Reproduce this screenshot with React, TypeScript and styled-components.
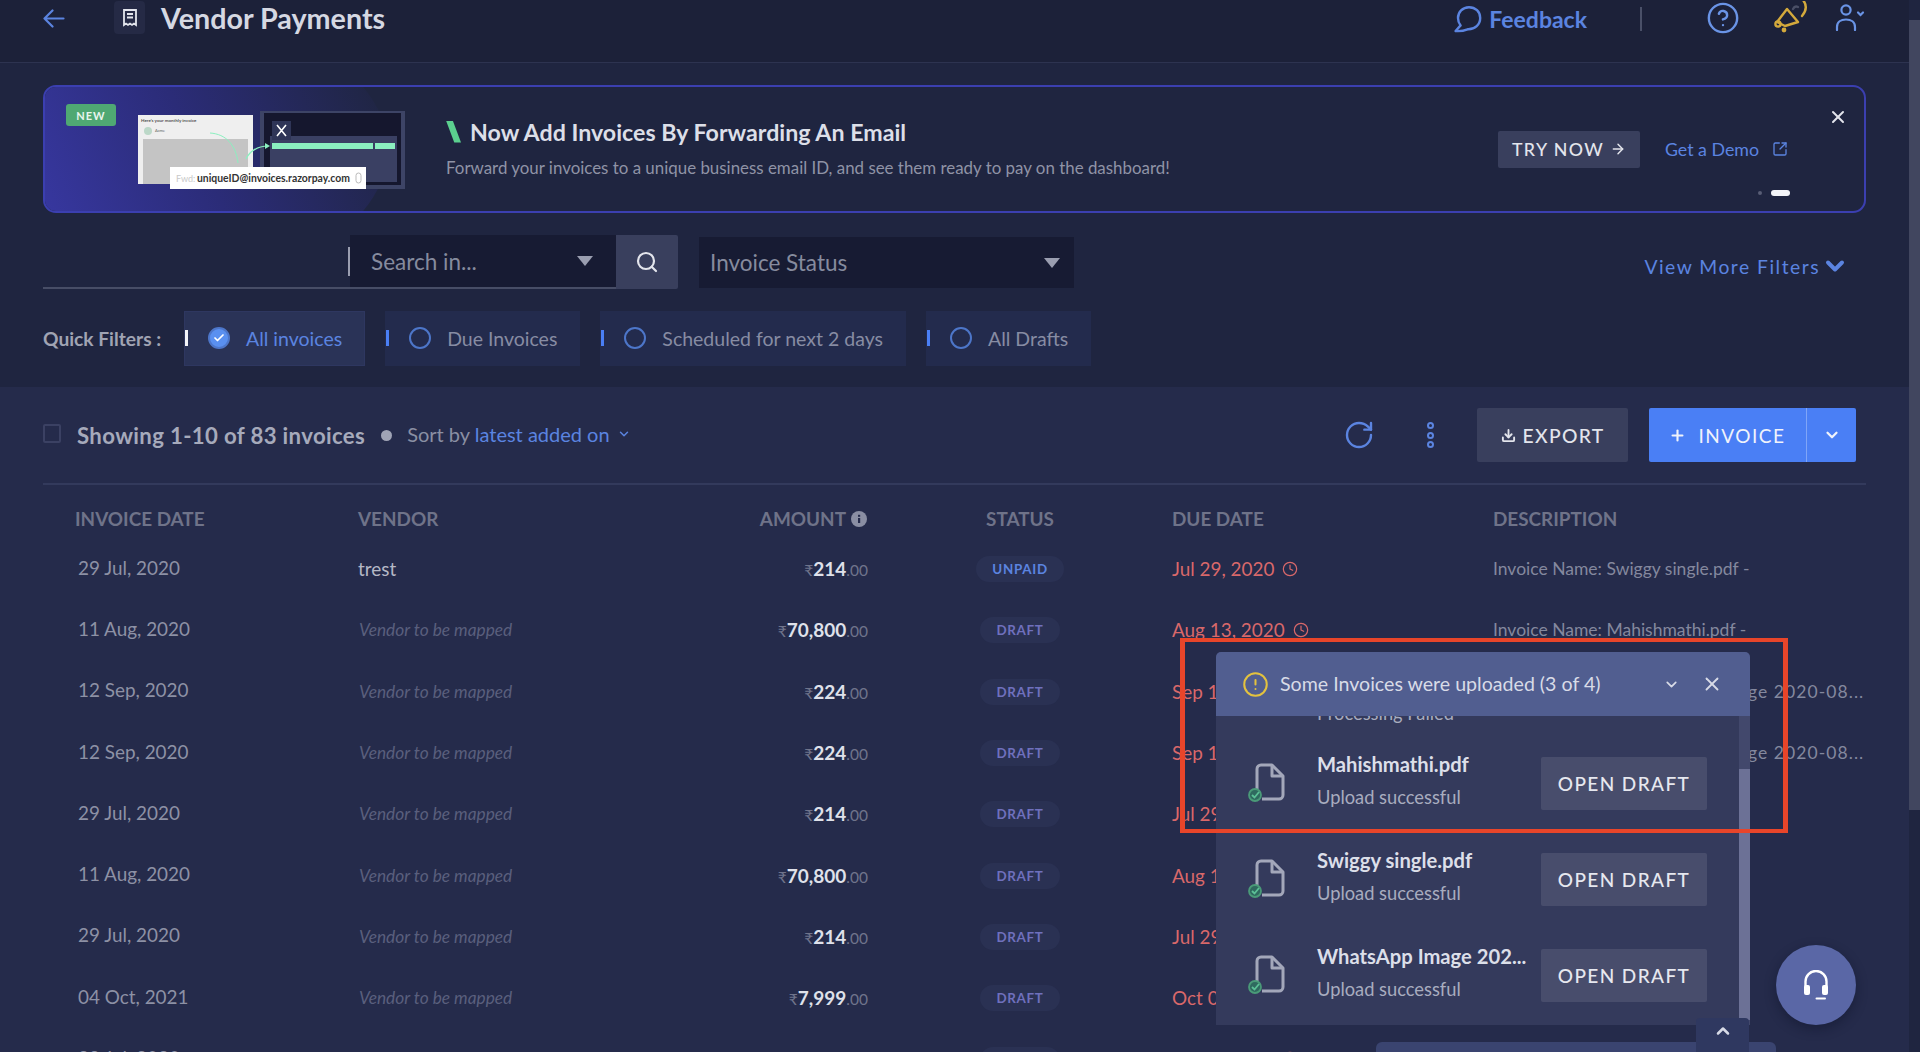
import React from 'react';
import styled, { createGlobalStyle } from 'styled-components';
import {
  ArrowRight,
  Check,
  ChevronDown,
  ChevronUp,
  CircleAlert,
  CircleHelp,
  Clock,
  Download,
  Plus,
  RotateCw,
  Search,
  SquareArrowOutUpRight,
  X,
} from 'lucide-react';

const blue = '#5b84e0';

const GlobalStyle = createGlobalStyle`
  html, body {
    margin: 0;
    padding: 0;
    background: #1f2540;
    font-family: 'Lato', 'Noto Sans', sans-serif;
  }
  * { box-sizing: border-box; }
`;

const Shell = styled.div`
  position: relative;
  display: flex;
  width: 1920px;
  height: 1052px;
  overflow: hidden;
`;

const Main = styled.div`
  width: 1909px;
  display: flex;
  flex-direction: column;
`;

const PageScrollTrack = styled.div`
  width: 11px;
  background: #1f2540;
  padding-top: 20px;
`;

const PageScrollThumb = styled.div`
  height: 790px;
  background: #41465f;
`;

/* header */
const Header = styled.header`
  height: 63px;
  flex: none;
  display: flex;
  align-items: flex-start;
  padding: 1px 44px 0 43px;
  background: #1c2139;
  border-bottom: 1px solid #2d3350;
`;

const BackLink = styled.div`
  width: 71px;
  height: 34px;
  display: flex;
  align-items: center;
  color: ${blue};
`;

const TitleIcon = styled.div`
  width: 31px;
  height: 33px;
  margin-right: 16px;
  border-radius: 4px;
  background: #252a45;
  display: flex;
  align-items: center;
  justify-content: center;
`;

const Title = styled.h1`
  margin: 0;
  font-size: 28.7px;
  line-height: 34px;
  font-weight: 700;
  color: #d5d8e2;
  flex: 1;
`;

const FeedbackLink = styled.div`
  display: flex;
  align-items: center;
  gap: 7px;
  height: 36px;
  color: ${blue};
  font-size: 23px;
  font-weight: 700;
`;

const HeaderDivider = styled.div`
  width: 2px;
  height: 24px;
  margin: 6px 64px 0 53px;
  background: #4a5068;
`;

const HeaderIcons = styled.div`
  display: flex;
  align-items: flex-start;
  height: 36px;
  gap: 24px;
`;

const HelpIcon = styled(CircleHelp)`
  margin-right: 9px;
`;

/* banner */
const Content = styled.div`
  height: 324px;
  flex: none;
  padding: 22px 43px 0;
  background: #1f2540;
`;

const Banner = styled.section`
  position: relative;
  height: 128px;
  display: flex;
  align-items: center;
  overflow: hidden;
  border: 2px solid #3b3fb0;
  border-radius: 13px;
  background: #1f2540;
  padding-left: 93px;
  padding-right: 76px;

  &::before {
    content: '';
    position: absolute;
    left: -2px;
    top: -2px;
    bottom: -2px;
    width: 345px;
    background: linear-gradient(65deg, #37379f 0%, #2b2c78 45%, #1f2540 100%);
    clip-path: ellipse(100% 130% at 0% 50%);
  }
`;

const NewBadge = styled.span`
  position: absolute;
  left: 21px;
  top: 17px;
  width: 50px;
  height: 22px;
  border-radius: 3px;
  background: #4fa873;
  color: #e8f5ee;
  font-size: 11px;
  font-weight: 700;
  letter-spacing: 1px;
  display: flex;
  align-items: center;
  justify-content: center;
`;

const Illustration = styled.svg`
  position: relative;
  flex: none;
  margin-top: 4px;
  margin-right: 40px;
`;

const BannerText = styled.div`
  flex: 1;
  position: relative;
  margin-top: -2px;
`;

const BannerHeading = styled.div`
  display: flex;
  align-items: center;
  gap: 9px;
  color: #dcdfe8;
  font-size: 23.2px;
  font-weight: 700;
  line-height: 28px;
`;

const BannerSub = styled.p`
  margin: 11px 0 0;
  color: #8f93a6;
  font-size: 16.9px;
  line-height: 22px;
`;

const Slash = styled.span`
  width: 15px;
  height: 22px;
  background: #5bd08f;
  clip-path: polygon(0 0, 45% 0, 100% 100%, 55% 100%);
`;

const TryNow = styled.button`
  width: 142px;
  height: 37px;
  margin: 0 25px 0 0;
  border: 0;
  border-radius: 2px;
  background: #393f5d;
  color: #e3e5ec;
  font: 500 17.8px 'Lato', sans-serif;
  letter-spacing: 1.4px;
  display: flex;
  align-items: center;
  justify-content: center;
  gap: 6px;
`;

const DemoLink = styled.a`
  display: flex;
  align-items: center;
  gap: 13px;
  color: ${blue};
  font-size: 17.8px;
`;

const BannerClose = styled.div`
  position: absolute;
  right: 16px;
  top: 20px;
  color: #e3e5ec;
  display: flex;
`;

const Dots = styled.div`
  position: absolute;
  right: 74px;
  top: 103px;
  display: flex;
  align-items: center;
  gap: 9px;
`;

const Dot = styled.span<{ $active?: boolean }>`
  width: ${(p) => (p.$active ? '19px' : '4px')};
  height: ${(p) => (p.$active ? '6px' : '4px')};
  border-radius: 3px;
  background: ${(p) => (p.$active ? '#f3f4f8' : '#585d74')};
`;

/* filters */
const SearchRow = styled.div`
  display: flex;
  align-items: flex-start;
  margin-top: 22px;
  height: 54px;
`;

const SearchField = styled.div`
  width: 573px;
  height: 54px;
  display: flex;
  border-bottom: 2px solid #474d66;
`;

const SearchInput = styled.div`
  width: 307px;
  display: flex;
  align-items: center;
  justify-content: flex-end;

  &::after {
    content: '';
    width: 2px;
    height: 29px;
    background: #9a9eb0;
  }
`;

const DarkSelect = styled.div<{ $width: number }>`
  width: ${(p) => p.$width}px;
  flex: none;
  display: flex;
  align-items: center;
  justify-content: space-between;
  padding: 0 14px 0 11px;
  background: #171b33;
  color: #868b9e;
  font-size: 22.5px;
`;

const InSelect = styled(DarkSelect)`
  height: 52px;
  padding-left: 21px;
  padding-right: 23px;
`;

const StatusSelect = styled(DarkSelect)`
  height: 51px;
  margin: 2px 0 0 21px;
`;

const Caret = styled.span`
  width: 0;
  height: 0;
  border-left: 8.5px solid transparent;
  border-right: 8.5px solid transparent;
  border-top: 10px solid #9a9eb0;
`;

const SearchButton = styled.button`
  width: 62px;
  height: 54px;
  flex: none;
  border: 0;
  border-radius: 0 2px 2px 0;
  background: #393f5d;
  color: #e3e5ec;
  display: flex;
  align-items: center;
  justify-content: center;
`;

const MoreFilters = styled.div`
  margin: 17px 17px 0 auto;
  display: flex;
  align-items: center;
  gap: 1px;
  color: ${blue};
  font-size: 19.3px;
  letter-spacing: 1.5px;
`;

const QuickRow = styled.div`
  display: flex;
  align-items: center;
  height: 56px;
  margin-top: 21px;
`;

const QuickLabel = styled.span`
  width: 141px;
  color: #a0a4b3;
  font-size: 19.2px;
  font-weight: 700;
`;

const Chip = styled.div<{ $active?: boolean }>`
  display: flex;
  align-items: center;
  height: 55px;
  margin-right: 20px;
  padding-right: 22px;
  border: 1px solid ${(p) => (p.$active ? '#2e3760' : 'transparent')};
  background: ${(p) => (p.$active ? '#2a3357' : '#232b4d')};
  color: ${(p) => (p.$active ? blue : '#878ca3')};
  font-size: 19.5px;
  &::before {
    content: '';
    width: 3px;
    height: 16px;
    margin-right: 20px;
    background: ${(p) => (p.$active ? '#f3f4f8' : '#4a7ff5')};
  }
`;

const Radio = styled.span<{ $checked?: boolean }>`
  width: 22px;
  height: 22px;
  margin-right: 16px;
  border-radius: 50%;
  border: 2px solid #4d76c9;
  background: ${(p) => (p.$checked ? '#5a90f0' : 'transparent')};
  color: #fff;
  display: flex;
  align-items: center;
  justify-content: center;
`;

/* invoice list */
const ListSection = styled.section`
  flex: 1;
  padding: 0 43px;
  background: #252b4b;
`;

const Toolbar = styled.div`
  height: 98px;
  display: flex;
  align-items: center;
  border-bottom: 2px solid #333a5c;
`;

const Checkbox = styled.span`
  width: 18px;
  height: 19px;
  margin-top: -4px;
  border: 2px solid #3b4163;
  border-radius: 2px;
`;

const Showing = styled.span`
  margin-left: 16px;
  color: #a6aabb;
  font-size: 22.2px;
  letter-spacing: 0.35px;
  font-weight: 700;
`;

const Bullet = styled.span`
  width: 11px;
  height: 11px;
  margin: 0 15px 0 16px;
  border-radius: 50%;
  background: #a0a4b6;
`;

const SortBy = styled.span`
  display: flex;
  align-items: center;
  gap: 7px;
  margin-top: -2px;
  color: #8a8fa3;
  font-size: 20px;
  b {
    font-weight: 400;
    color: ${blue};
  }
`;

const ToolbarRight = styled.div`
  margin-left: auto;
  margin-right: 10px;
  display: flex;
  align-items: center;
  color: ${blue};
`;

const Kebab = styled.div`
  display: flex;
  flex-direction: column;
  gap: 2.5px;
  margin: 0 43px 0 52px;
  span {
    width: 7px;
    height: 7px;
    border-radius: 50%;
    border: 2px solid ${blue};
  }
`;

const ExportButton = styled.button`
  width: 151px;
  height: 54px;
  border: 0;
  border-radius: 2px;
  background: #393f5d;
  color: #e3e5ec;
  font: 500 19.3px 'Lato', sans-serif;
  letter-spacing: 1.3px;
  display: flex;
  align-items: center;
  justify-content: center;
  gap: 7px;
`;

const InvoiceButton = styled.div`
  width: 207px;
  height: 54px;
  margin-left: 21px;
  border-radius: 2px;
  background: #4a7ff5;
  color: #f0f3fb;
  font-size: 19px;
  letter-spacing: 1.5px;
  display: flex;
`;

const InvoiceLabel = styled.div`
  width: 158px;
  display: flex;
  align-items: center;
  justify-content: center;
  gap: 12px;
  border-right: 1px solid #7fa5f8;
`;

const InvoiceCaret = styled.div`
  flex: 1;
  display: flex;
  align-items: center;
  justify-content: center;
`;

const TableGrid = styled.div`
  display: grid;
  grid-template-columns: 283px 262px 248px 304px 321px 373px;
  padding-left: 32px;
  align-items: center;
`;

const TableHead = styled(TableGrid)`
  height: 53px;
  padding-top: 22px;
  padding-bottom: 8px;
  color: #6f7389;
  font-size: 18.9px;
  font-weight: 700;
`;

const HeadAmount = styled.span`
  display: flex;
  align-items: center;
  justify-content: flex-end;
  gap: 5px;
  padding-right: 1px;
`;

const HeadStatus = styled.span`
  text-align: center;
`;

const TableRow = styled(TableGrid)`
  height: 61.3px;
  font-size: 18.9px;
`;

const DateCell = styled.span`
  padding-left: 3px;
  margin-top: -3px;
  color: #8d91a5;
`;

const VendorCell = styled.span<{ $mapped?: boolean }>`
  color: ${(p) => (p.$mapped ? '#b5b8c6' : '#5a5f7d')};
  font-style: ${(p) => (p.$mapped ? 'normal' : 'italic')};
  font-size: ${(p) => (p.$mapped ? '18.9px' : '17.3px')};
  padding-left: ${(p) => (p.$mapped ? '0' : '1px')};
`;

const AmountCell = styled.span`
  text-align: right;
  color: #dfe1ea;
  font-weight: 700;
  font-size: 19px;
  small {
    font-size: 15.5px;
    font-weight: 400;
    color: #70748b;
  }
`;

const StatusCell = styled.span`
  display: flex;
  justify-content: center;
`;

const StatusPill = styled.span<{ $unpaid?: boolean }>`
  height: 26px;
  margin-top: 1px;
  padding: 0 16px;
  border-radius: 13px;
  background: #2a3153;
  color: ${(p) => (p.$unpaid ? blue : '#6f70bd')};
  font-size: 13.4px;
  font-weight: 700;
  letter-spacing: 0.7px;
  display: flex;
  align-items: center;
`;

const DueCell = styled.span`
  display: flex;
  align-items: center;
  gap: 8px;
  color: #d9686a;
`;

const DescriptionCell = styled.span<{ $wide?: boolean }>`
  color: #84889e;
  font-size: 17.5px;
  letter-spacing: ${(p) => (p.$wide ? '1.07px' : '0')};
  overflow: hidden;
  white-space: nowrap;
  text-overflow: ellipsis;
`;

/* upload popup */
const UploadPopup = styled.aside`
  position: absolute;
  left: 1216px;
  top: 652px;
  width: 534px;
  height: 373px;
  display: flex;
  flex-direction: column;
  background: #343a5c;
  border-radius: 5px 5px 0 0;
`;

const PopupHeader = styled.div`
  height: 64px;
  flex: none;
  display: flex;
  align-items: center;
  gap: 21px;
  padding: 0 27px 0 26px;
  border-radius: 5px 5px 0 0;
  background: #515e90;
  color: #d8dbe7;
  font-size: 19.6px;
`;

const PopupTitle = styled.span`
  margin-left: -10px;
  margin-top: -1px;
  flex: 1;
`;

const PopupBody = styled.div`
  flex: 1;
  display: flex;
  min-height: 0;
`;

const PopupList = styled.div`
  flex: 1;
  overflow: hidden;
`;

const PopupTrack = styled.div`
  width: 11px;
  padding-top: 53px;
  background: #42486c;
`;

const PopupThumb = styled.div`
  height: 251px;
  background: #6c7196;
`;

const ClippedStatus = styled.div`
  height: 19px;
  overflow: hidden;
  padding-left: 101px;
  color: #a8acbf;
  font-size: 18.3px;
  line-height: 24px;
  span {
    display: block;
    margin-top: -15px;
  }
`;

const UploadRow = styled.div`
  height: 96px;
  display: flex;
  align-items: center;
  padding-left: 32px;
`;

const FileIcon = styled.svg`
  flex: none;
  margin-right: 32px;
`;

const UploadText = styled.div`
  width: 224px;
  flex: none;
`;

const UploadName = styled.div`
  margin-top: -8px;
  color: #dcdfe9;
  font-size: 20.2px;
  font-weight: 700;
  line-height: 26px;
  white-space: nowrap;
`;

const UploadState = styled.div`
  margin-top: 9px;
  color: #a8acbf;
  font-size: 18.3px;
  line-height: 22px;
`;

const OpenDraft = styled.button`
  width: 166px;
  height: 53px;
  border: 0;
  border-radius: 2px;
  background: #484d6c;
  color: #e6e8ef;
  font: 500 19px 'Lato', sans-serif;
  letter-spacing: 1.4px;
`;

const Highlight = styled.div`
  position: absolute;
  left: 1180px;
  top: 638px;
  width: 608px;
  height: 195px;
  border: solid #e8452a;
  border-width: 4px 5px;
  pointer-events: none;
`;

const CollapseTab = styled.div`
  position: absolute;
  left: 1696px;
  top: 1018px;
  width: 53px;
  height: 34px;
  z-index: 2;
  border-radius: 4px 4px 0 0;
  background: #2f3860;
  color: #d8dbe7;
  display: flex;
  justify-content: center;
  padding-top: 3px;
`;

const BottomBar = styled.div`
  position: absolute;
  left: 1376px;
  top: 1042px;
  width: 400px;
  height: 10px;
  border-radius: 6px 6px 0 0;
  background: #3a4470;
`;

const SupportFab = styled.div`
  position: absolute;
  left: 1776px;
  top: 945px;
  width: 80px;
  height: 80px;
  border-radius: 50%;
  background: #5a67a6;
  box-shadow: 0 4px 12px rgba(10, 14, 35, 0.4);
  display: flex;
  align-items: center;
  justify-content: center;
`;

const rows = [
  { date: '29 Jul, 2020', vendor: 'trest', rupees: '214', status: 'UNPAID', due: 'Jul 29, 2020', desc: 'Invoice Name: Swiggy single.pdf -' },
  { date: '11 Aug, 2020', rupees: '70,800', status: 'DRAFT', due: 'Aug 13, 2020', desc: 'Invoice Name: Mahishmathi.pdf -' },
  { date: '12 Sep, 2020', rupees: '224', status: 'DRAFT', due: 'Sep 12, 2020', desc: 'Invoice Name: WhatsApp Image 2020-08...', wide: true },
  { date: '12 Sep, 2020', rupees: '224', status: 'DRAFT', due: 'Sep 12, 2020', desc: 'Invoice Name: WhatsApp Image 2020-08...', wide: true },
  { date: '29 Jul, 2020', rupees: '214', status: 'DRAFT', due: 'Jul 29, 2020', desc: 'Invoice Name: Swiggy single.pdf -' },
  { date: '11 Aug, 2020', rupees: '70,800', status: 'DRAFT', due: 'Aug 13, 2020', desc: 'Invoice Name: Mahishmathi.pdf -' },
  { date: '29 Jul, 2020', rupees: '214', status: 'DRAFT', due: 'Jul 29, 2020', desc: 'Invoice Name: Swiggy single.pdf -' },
  { date: '04 Oct, 2021', rupees: '7,999', status: 'DRAFT', due: 'Oct 04, 2021', desc: 'Invoice Name: Invoice single.pdf -' },
  { date: '29 Jul, 2020', rupees: '214', status: 'DRAFT', due: 'Jul 29, 2020', desc: 'Invoice Name: Swiggy single.pdf -' },
];

const uploads = ['Mahishmathi.pdf', 'Swiggy single.pdf', 'WhatsApp Image 202...'];

const filters = ['Due Invoices', 'Scheduled for next 2 days', 'All Drafts'];

const BackArrow = () => (
  <svg width="22" height="19" viewBox="0 0 22 19" fill="none" stroke="currentColor" strokeWidth="2.2" strokeLinecap="round" strokeLinejoin="round">
    <path d="M1.5 9.5h19M9.5 1.5l-8 8 8 8" />
  </svg>
);

const ReceiptGlyph = () => (
  <svg width="18" height="20" viewBox="0 0 18 20" fill="none" stroke="#e3e5ec" strokeWidth="1.8">
    <path d="M3 2h12v15l-2-1.4-2 1.4-2-1.4L7 17l-2-1.4L3 17z" />
    <path d="M6 6h6M6 9.5h6" />
  </svg>
);

const FeedbackGlyph = () => (
  <svg width="28" height="28" viewBox="0 0 28 28" fill="none" stroke={blue} strokeWidth="2.4" strokeLinejoin="round">
    <path d="M15 2.2C8.6 2.2 4 7 4 13c0 3 1 5.4 2.6 7.4L1.6 26c5 .4 9-.5 12-1.7 7.5.4 12.6-5 12.6-11.3S21.4 2.2 15 2.2z" />
  </svg>
);

const MegaphoneGlyph = () => (
  <svg width="38" height="34" viewBox="0 0 38 34" fill="none" stroke="#d3a93c" strokeWidth="2.4" strokeLinecap="round" strokeLinejoin="round">
    <path d="M4 21 14 8l11 13-13 4z" />
    <circle cx="5" cy="23" r="2.6" />
    <circle cx="11" cy="29" r="1.2" />
    <path d="M30-1c4 5 4 10-1 16" />
    <path d="M20 8c1-2 3-3 5-2" stroke="#4a4f66" />
  </svg>
);

const UserGlyph = () => (
  <svg width="30" height="30" viewBox="0 0 30 30" fill="none" stroke="#6a94e6" strokeWidth="2.2" strokeLinecap="round">
    <circle cx="11" cy="9" r="4.6" />
    <path d="M2 29v-3c0-5 4-7.5 9-7.5s9 2.5 9 7.5v3" />
    <path d="m23 11.5 2.5 2.5 2.5-2.5" />
  </svg>
);

const InfoGlyph = () => (
  <svg width="16" height="16" viewBox="0 0 16 16">
    <circle cx="8" cy="8" r="8" fill="#8a8ea3" />
    <rect x="7" y="7" width="2.2" height="5" fill="#252b4b" />
    <rect x="7" y="3.8" width="2.2" height="2" fill="#252b4b" />
  </svg>
);

const HeadsetGlyph = () => (
  <svg width="26" height="30" viewBox="0 0 26 30" fill="none" stroke="#fff" strokeWidth="2.4" strokeLinecap="round">
    <path d="M2.5 16v-4.5a10.5 10.5 0 0 1 21 0V16" />
    <rect x="1" y="15" width="6" height="10" rx="2" fill="#fff" stroke="none" />
    <rect x="19" y="15" width="6" height="10" rx="2" fill="#fff" stroke="none" />
    <path d="M13.5 28.5h8.5" strokeWidth="2" />
  </svg>
);

const UploadedFile = () => (
  <FileIcon width="37" height="42" viewBox="0 0 37 42" fill="none">
    <path d="M9 28V7a4 4 0 0 1 4-4h11l11 11v19a4 4 0 0 1-4 4H14" stroke="#a3a7ba" strokeWidth="3" strokeLinejoin="round" />
    <path d="M24 3v11h11" stroke="#a3a7ba" strokeWidth="3" strokeLinejoin="round" />
    <circle cx="7" cy="33" r="6" fill="#2f6a5f" stroke="#4a9a78" strokeWidth="1.8" />
    <path d="m4 33 2.5 2.5 4.5-5.5" stroke="#5cc096" strokeWidth="1.8" />
  </FileIcon>
);

const BannerArt = () => (
  <Illustration width="268" height="80" viewBox="0 0 268 80" fill="none">
    <rect x="0" y="4" width="115" height="69" fill="#efefef" />
    <text x="3" y="11" fontFamily="Lato" fontSize="4.5" fontWeight="700" fill="#555">Here's your monthly invoice</text>
    <circle cx="10" cy="20" r="4" fill="#bcd8c8" />
    <text x="17" y="21" fontFamily="Lato" fontSize="4" fill="#666">Acme</text>
    <rect x="5" y="28" width="105" height="45" fill="#c4c4c4" />
    <rect x="124" y="0" width="141" height="76" fill="#15172e" stroke="#3d4466" strokeWidth="4" />
    <rect x="132" y="25" width="127" height="46" fill="#3a4063" />
    <rect x="134" y="10" width="19" height="19" fill="#2f3557" />
    <path d="m139 14 9 11m0-11-9 11" stroke="#fff" strokeWidth="1.6" />
    <rect x="134" y="32" width="101" height="6" fill="#8bf0c0" />
    <rect x="237" y="32" width="20" height="6" fill="#8bf0c0" />
    <path d="M72 22c16 1 26 12 28 30" stroke="#8bf0c0" strokeWidth="1" />
    <path d="M108 48c3-7 11-13 22-13" stroke="#8bf0c0" strokeWidth="1.2" />
    <path d="m127 32 5 3-5 3z" fill="#8bf0c0" />
    <rect x="32" y="56" width="196" height="22" fill="#fff" />
    <text x="38" y="71" fontFamily="Lato" fontSize="9" fill="#c9c9c9">Fwd:</text>
    <text x="59" y="71" fontFamily="Lato" fontSize="10.4" fontWeight="700" fill="#333">uniqueID@invoices.razorpay.com</text>
    <rect x="218" y="62" width="5" height="10" rx="2.5" stroke="#bbb" strokeWidth="1" />
  </Illustration>
);

export default function App() {
  return (
    <>
      <GlobalStyle />
      <Shell>
        <Main>
          <Header>
            <BackLink>
              <BackArrow />
            </BackLink>
            <TitleIcon>
              <ReceiptGlyph />
            </TitleIcon>
            <Title>Vendor Payments</Title>
            <FeedbackLink>
              <FeedbackGlyph />
              Feedback
            </FeedbackLink>
            <HeaderDivider />
            <HeaderIcons>
              <HelpIcon size={34} strokeWidth={1.7} color="#6a94e6" />
              <MegaphoneGlyph />
              <UserGlyph />
            </HeaderIcons>
          </Header>

          <Content>
            <Banner>
              <NewBadge>NEW</NewBadge>
              <BannerArt />
              <BannerText>
                <BannerHeading>
                  <Slash />
                  Now Add Invoices By Forwarding An Email
                </BannerHeading>
                <BannerSub>
                  Forward your invoices to a unique business email ID, and see them ready to pay on the dashboard!
                </BannerSub>
              </BannerText>
              <TryNow>
                TRY NOW <ArrowRight size={16} strokeWidth={2.2} />
              </TryNow>
              <DemoLink>
                Get a Demo <SquareArrowOutUpRight size={16} strokeWidth={2} />
              </DemoLink>
              <BannerClose>
                <X size={20} strokeWidth={2.4} />
              </BannerClose>
              <Dots>
                <Dot />
                <Dot $active />
              </Dots>
            </Banner>

            <SearchRow>
              <SearchField>
                <SearchInput />
                <InSelect $width={266}>
                  Search in...
                  <Caret />
                </InSelect>
              </SearchField>
              <SearchButton>
                <Search size={24} strokeWidth={2.2} />
              </SearchButton>
              <StatusSelect $width={375}>
                Invoice Status
                <Caret />
              </StatusSelect>
              <MoreFilters>
                View More Filters
                <ChevronDown size={28} strokeWidth={3.4} />
              </MoreFilters>
            </SearchRow>

            <QuickRow>
              <QuickLabel>Quick Filters :</QuickLabel>
              <Chip $active>
                <Radio $checked>
                  <Check size={12} strokeWidth={3.5} />
                </Radio>
                All invoices
              </Chip>
              {filters.map((f) => (
                <Chip key={f}>
                  <Radio />
                  {f}
                </Chip>
              ))}
            </QuickRow>
          </Content>

          <ListSection>
            <Toolbar>
              <Checkbox />
              <Showing>Showing 1-10 of 83 invoices</Showing>
              <Bullet />
              <SortBy>
                <span>
                  Sort by <b>latest added on</b>
                </span>
                <ChevronDown size={14} strokeWidth={2.5} color={blue} />
              </SortBy>
              <ToolbarRight>
                <RotateCw size={32} strokeWidth={1.8} />
                <Kebab>
                  <span />
                  <span />
                  <span />
                </Kebab>
                <ExportButton>
                  <Download size={15} strokeWidth={3} />
                  EXPORT
                </ExportButton>
                <InvoiceButton>
                  <InvoiceLabel>
                    <Plus size={17} strokeWidth={3} />
                    INVOICE
                  </InvoiceLabel>
                  <InvoiceCaret>
                    <ChevronDown size={18} strokeWidth={3} />
                  </InvoiceCaret>
                </InvoiceButton>
              </ToolbarRight>
            </Toolbar>

            <TableHead>
              <span>INVOICE DATE</span>
              <span>VENDOR</span>
              <HeadAmount>
                AMOUNT
                <InfoGlyph />
              </HeadAmount>
              <HeadStatus>STATUS</HeadStatus>
              <span>DUE DATE</span>
              <span>DESCRIPTION</span>
            </TableHead>

            {rows.map((r, i) => (
              <TableRow key={i}>
                <DateCell>{r.date}</DateCell>
                <VendorCell $mapped={!!r.vendor}>{r.vendor || 'Vendor to be mapped'}</VendorCell>
                <AmountCell>
                  <small>₹</small>
                  {r.rupees}
                  <small>.00</small>
                </AmountCell>
                <StatusCell>
                  <StatusPill $unpaid={r.status === 'UNPAID'}>{r.status}</StatusPill>
                </StatusCell>
                <DueCell>
                  {r.due}
                  <Clock size={16} strokeWidth={1.8} />
                </DueCell>
                <DescriptionCell $wide={r.wide}>{r.desc}</DescriptionCell>
              </TableRow>
            ))}
          </ListSection>
        </Main>
        <PageScrollTrack>
          <PageScrollThumb />
        </PageScrollTrack>

        <UploadPopup>
          <PopupHeader>
            <CircleAlert size={27} strokeWidth={1.8} color="#e3c23f" />
            <PopupTitle>Some Invoices were uploaded (3 of 4)</PopupTitle>
            <ChevronDown size={17} strokeWidth={2.4} />
            <X size={22} strokeWidth={2} />
          </PopupHeader>
          <PopupBody>
            <PopupList>
              <ClippedStatus>
                <span>Processing Failed</span>
              </ClippedStatus>
              {uploads.map((name) => (
                <UploadRow key={name}>
                  <UploadedFile />
                  <UploadText>
                    <UploadName>{name}</UploadName>
                    <UploadState>Upload successful</UploadState>
                  </UploadText>
                  <OpenDraft>OPEN DRAFT</OpenDraft>
                </UploadRow>
              ))}
            </PopupList>
            <PopupTrack>
              <PopupThumb />
            </PopupTrack>
          </PopupBody>
        </UploadPopup>

        <Highlight />
        <BottomBar />
        <CollapseTab>
          <ChevronUp size={20} strokeWidth={3} />
        </CollapseTab>
        <SupportFab>
          <HeadsetGlyph />
        </SupportFab>
      </Shell>
    </>
  );
}
